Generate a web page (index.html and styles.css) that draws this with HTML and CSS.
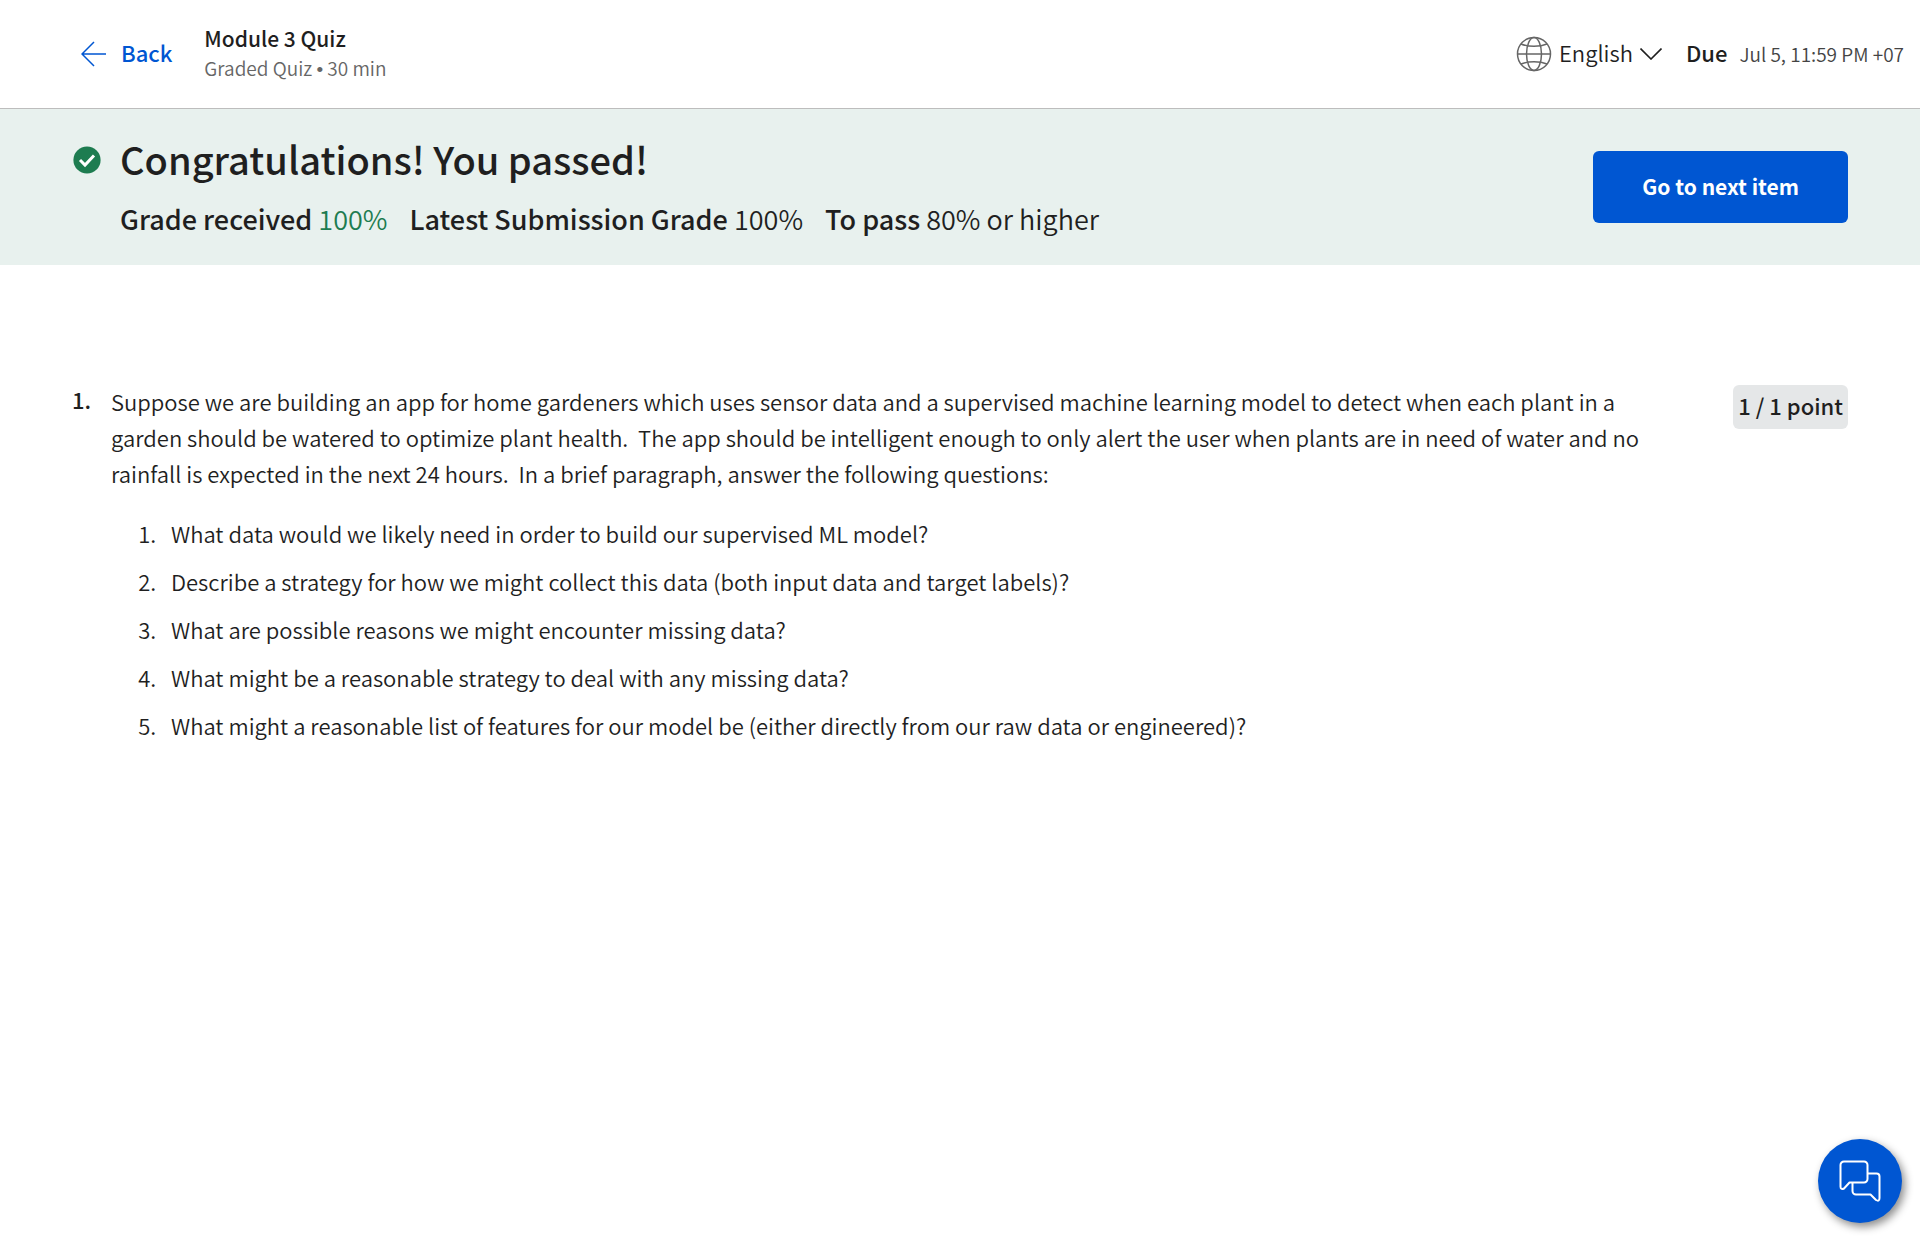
FILE: index.html
```html
<!DOCTYPE html>
<html lang="en">
<head>
<meta charset="utf-8">
<title>Module 3 Quiz</title>
<link rel="stylesheet" href="styles.css">
</head>
<body>
<header class="topbar">
  <a class="back" href="#">
    <svg class="back-icon" width="26" height="26" viewBox="0 0 26 26" fill="none" stroke="currentColor" stroke-width="1.5"><path d="M13 1 1 13l12 12M1 13h24"/></svg>
    <span>Back</span>
  </a>
  <div class="module">
    <h1 class="module-name">Module 3 Quiz</h1>
    <p class="module-info">Graded Quiz <span class="dot">•</span> 30 min</p>
  </div>
  <button class="language" type="button">
    <svg width="36" height="36" viewBox="0 0 36 36" fill="none" stroke="#666" stroke-width="1.5"><circle cx="18" cy="18" r="16.5"/><ellipse cx="18" cy="18" rx="7.5" ry="16.5"/><path d="M1.500 18h33M5 8c7 3 19 3 26 0M5 28c7-3 19-3 26 0"/></svg>
    <span>English</span>
    <svg width="22" height="12" viewBox="0 0 22 12" fill="none" stroke="#1f1f1f" stroke-width="1.600"><path d="M.5.5 11 11 21.500.5"/></svg>
  </button>
  <p class="due"><strong>Due</strong><time class="due-date">Jul 5, 11:59 PM +07</time></p>
</header>
<section class="result">
  <svg class="passed-icon" width="28" height="28" viewBox="0 0 28 28"><circle cx="14" cy="14" r="13.600" fill="#1d7c50"/><path d="m7 14 5 5 9-9.500" fill="none" stroke="#fff" stroke-width="3"/></svg>
  <div class="summary">
    <h2 class="headline">Congratulations! You passed!</h2>
    <ul class="grades">
      <li><strong>Grade received</strong> <span class="good">100%</span></li>
      <li><strong>Latest Submission Grade</strong> 100%</li>
      <li><strong>To pass</strong> 80% or higher</li>
    </ul>
  </div>
  <button class="next" type="button">Go to next item</button>
</section>
<main class="question">
  <div class="number">1.</div>
  <div class="prompt">
    <p>Suppose we are building an app for home gardeners which uses sensor data and a supervised machine learning model to detect when each plant in a garden should be watered to optimize plant health.&nbsp; The app should be intelligent enough to only alert the user when plants are in need of water and no rainfall is expected in the next 24 hours.&nbsp; In a brief paragraph, answer the following questions:</p>
    <ol class="parts">
      <li>What data would we likely need in order to build our supervised ML model?</li>
      <li>Describe a strategy for how we might collect this data (both input data and target labels)?</li>
      <li>What are possible reasons we might encounter missing data?</li>
      <li>What might be a reasonable strategy to deal with any missing data?</li>
      <li>What might a reasonable list of features for our model be (either directly from our raw data or engineered)?</li>
    </ol>
  </div>
  <div class="points">1 / 1 point</div>
</main>
<button class="chat" type="button" aria-label="Open chat">
  <svg width="42" height="42" viewBox="0 0 42 42" fill="none" stroke="#fff" stroke-width="2" stroke-linejoin="round"><path d="M5 1.500h20a3.500 3.500 0 0 1 3.500 3.500v14a3.500 3.500 0 0 1-3.500 3.500H10.500l-5.500 6q-3.500 1.500-3.500-2V5A3.500 3.500 0 0 1 5 1.500Z"/><path d="M29 13.500h8.500a3 3 0 0 1 3 3V38q0 4-3.500 2l-5.500-5.500H17a3.500 3.500 0 0 1-3.500-3.500v-8"/></svg>
</button>
</body>
</html>
```
FILE: styles.css
```css
* { box-sizing: border-box; }
body {
  margin: 0;
  background: #fff;
  color: #1f1f1f;
  font: 350 22px/36px "Noto Sans CJK SC", "Noto Sans", sans-serif;
}
h1, h2, p, ul, ol { margin: 0; padding: 0; }
button { border: 0; padding: 0; font: inherit; color: inherit; cursor: pointer; }
svg { display: block; flex: none; }
strong { font-weight: 500; }

.topbar {
  display: flex;
  align-items: center;
  height: 109px;
  padding: 0 16px 0 81px;
  border-bottom: 1px solid #bdbdbd;
}
.back {
  display: flex;
  align-items: center;
  gap: 14px;
  color: #0056d2;
  font-weight: 500;
  text-decoration: none;
}
.back span, .language span, .due strong { padding-bottom: 4px; }
.module { margin-left: 32px; padding-bottom: 1px; }
.module-name { font-size: 21px; line-height: 30px; font-weight: 500; }
.module-info { font-size: 19px; line-height: 30px; color: #666; }
.dot { font-family: "Liberation Sans", sans-serif; }
.language {
  display: flex;
  align-items: center;
  gap: 7px;
  margin-left: auto;
  background: none;
}
.due { display: flex; align-items: center; gap: 12px; margin-left: 24px; }
.due-date { padding-bottom: 1px; font-size: 19px; color: #444; }

.result {
  display: flex;
  padding: 26px 72px;
  background: #e8f1ee;
}
.passed-icon { margin-top: 11px; margin-left: 1px; }
.summary { flex: 1; margin-left: 19px; }
.headline { font-size: 38px; line-height: 48px; font-weight: 500; }
.grades {
  display: flex;
  gap: 22px;
  margin-top: 18px;
  padding-bottom: 2px;
  font-size: 27px;
  line-height: 36px;
  list-style: none;
}
.good { color: #1d7c50; }
.next {
  align-self: center;
  height: 72px;
  padding: 0 49px 3px;
  border-radius: 6px;
  background: #0056d2;
  color: #fff;
  font-size: 21px;
  font-weight: 700;
}

.question {
  display: flex;
  align-items: flex-start;
  padding: 118px 72px 0;
}
.number { width: 39px; font-weight: 500; line-height: 32px; }
.prompt { flex: 1; }
.parts { margin-top: 24px; padding-left: 60px; }
.parts li + li { margin-top: 12px; }
.parts li::marker { content: counter(list-item) ".\00a0\00a0\00a0"; }
.points {
  margin-top: 2px;
  margin-left: 80px;
  padding: 2px 5px 6px;
  border-radius: 6px;
  background: #e5e7e8;
  font-weight: 500;
}

.chat {
  position: fixed;
  right: 18px;
  bottom: 19px;
  display: grid;
  place-items: center;
  width: 84px;
  height: 84px;
  border-radius: 50%;
  background: #0056d2;
  box-shadow: 3px 4px 9px rgba(0, 0, 0, .45);
}
```
